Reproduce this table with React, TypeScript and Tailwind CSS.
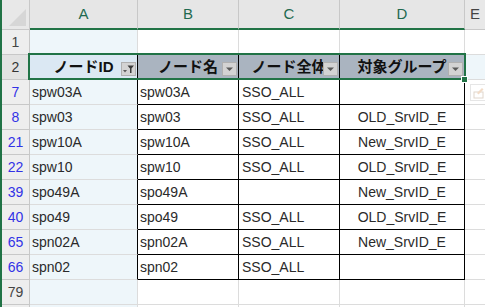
const rows = [
  { n: "7", a: "spw03A", b: "spw03A", c: "SSO_ALL", d: "" },
  { n: "8", a: "spw03", b: "spw03", c: "SSO_ALL", d: "OLD_SrvID_E" },
  { n: "21", a: "spw10A", b: "spw10A", c: "SSO_ALL", d: "New_SrvID_E" },
  { n: "22", a: "spw10", b: "spw10", c: "SSO_ALL", d: "OLD_SrvID_E" },
  { n: "39", a: "spo49A", b: "spo49A", c: "", d: "New_SrvID_E" },
  { n: "40", a: "spo49", b: "spo49", c: "SSO_ALL", d: "OLD_SrvID_E" },
  { n: "65", a: "spn02A", b: "spn02A", c: "SSO_ALL", d: "New_SrvID_E" },
  { n: "66", a: "spn02", b: "spn02", c: "SSO_ALL", d: "" },
];

const DropBtn = ({ filtered }: { filtered?: boolean }) => (
  <div className="absolute right-[1px] bottom-[3px] w-[15px] h-[14px] bg-[#d3d3d3] border border-[#b0b0b0] flex items-center justify-center">
    {filtered ? (
      <svg width="13" height="12" viewBox="0 0 13 12">
        <path d="M1 7h4l-2 2.5z" fill="#5a5a5a" />
        <path d="M5.5 2.5h6.5l-2.5 3v4.5h-1.5v-4.5z" fill="#3a3a3a" />
      </svg>
    ) : (
      <svg width="9" height="6" viewBox="0 0 9 6">
        <path d="M1 1.5h7l-3.5 3.5z" fill="#5a5a5a" />
      </svg>
    )}
  </div>
);

const HeadCell = ({ label, w, bg, filtered }: { label: string; w: string; bg: string; filtered?: boolean }) => (
  <div className={`relative ${w} ${bg} h-full border-r border-black overflow-hidden flex items-center justify-center font-bold text-[15px] text-[#111] font-['Liberation_Sans','Noto_Sans_CJK_JP',sans-serif] whitespace-nowrap`}>
    <span>{label}</span>
    <DropBtn filtered={filtered} />
  </div>
);

export default function App() {
  return (
    <div className="relative w-[485px] h-[307px] overflow-hidden bg-white border-l-2 border-[#217346] font-['Liberation_Sans','Noto_Sans_CJK_JP',sans-serif] text-[14px] text-[#2a2a2a]">
      {/* column headers */}
      <div className="flex h-[30px]">
        <div className="w-[28px] h-full bg-[#e8e8e8] border-r border-b border-[#c8c8c8] flex items-end justify-end p-[3px]">
          <div className="w-[17px] h-[17px] bg-[#d6d6d6] [clip-path:polygon(100%_0,100%_100%,0_100%)]" />
        </div>
        {[
          ["A", "w-[108px]"],
          ["B", "w-[101px]"],
          ["C", "w-[101px]"],
          ["D", "w-[125px]"],
        ].map(([l, w]) => (
          <div key={l} className={`${w} h-full bg-[#e6e6e6] border-r border-[#c8c8c8] border-b-2 border-b-[#217346] flex items-center justify-center text-[15px] text-[#1f6a50]`}>
            {l}
          </div>
        ))}
        <div className="flex-1 h-full bg-[#e8e8e8] border-b border-[#c8c8c8] flex items-center justify-center text-[15px] text-[#444]">
          E
        </div>
      </div>

      {/* row 1 */}
      <div className="flex h-[25px]">
        <div className="w-[28px] bg-[#eeeeee] border-r border-b border-[#c8c8c8] flex items-center justify-center text-[#444]">1</div>
        <div className="w-[108px] bg-[#eef6fa] border-r border-b border-[#dcdcdc]" />
        <div className="w-[101px] border-r border-b border-[#dcdcdc]" />
        <div className="w-[101px] border-r border-b border-[#dcdcdc]" />
        <div className="w-[125px] border-r border-b border-[#dcdcdc]" />
        <div className="flex-1 border-b border-[#dcdcdc]" />
      </div>

      {/* row 2 header of table */}
      <div className="relative flex h-[25px]">
        <div className="w-[28px] bg-[#e2e2e2] border-r border-b border-[#c8c8c8] flex items-center justify-center text-[#333]">2</div>
        <div className="flex h-[24px]">
          <HeadCell label="ノードID" w="w-[108px]" bg="bg-[#dbe8f3]" filtered />
          <HeadCell label="ノード名" w="w-[101px]" bg="bg-[#aab4c0]" />
          <HeadCell label="ノード全体" w="w-[101px]" bg="bg-[#aab4c0]" />
          <HeadCell label="対象グループ" w="w-[125px]" bg="bg-[#aab4c0]" />
        </div>
        <div className="flex-1 bg-[#eef6fa] border-b border-[#dcdcdc]" />
        <div className="absolute left-[26px] top-[-2px] w-[438px] h-[27px] border-2 border-[#217346]" />
        <div className="absolute left-[459px] top-[21px] w-[7px] h-[7px] bg-[#217346] border border-white" />
      </div>

      {/* data rows */}
      {rows.map((r) => (
        <div key={r.n} className="flex h-[25px]">
          <div className="w-[28px] bg-[#eeeeee] border-r border-b border-[#c8c8c8] flex items-center justify-center text-[#3232e6]">{r.n}</div>
          <div className="w-[108px] bg-[#eef6fa] border-r border-r-black border-b border-b-[#dcdcdc] flex items-center pl-[2px]">{r.a}</div>
          <div className="w-[101px] border-r border-b border-black flex items-center pl-[2px]">{r.b}</div>
          <div className="w-[101px] border-r border-b border-black flex items-center pl-[3px]">{r.c}</div>
          <div className="w-[125px] border-r border-b border-black flex items-center justify-center">{r.d}</div>
          <div className="flex-1 border-b border-[#dcdcdc]" />
        </div>
      ))}

      {/* row 79 */}
      <div className="flex h-[25px]">
        <div className="w-[28px] bg-[#eeeeee] border-r border-b border-[#c8c8c8] flex items-center justify-center text-[#444]">79</div>
        <div className="w-[108px] bg-[#eef6fa] border-r border-b border-[#dcdcdc]" />
        <div className="w-[101px] border-r border-b border-[#dcdcdc]" />
        <div className="w-[101px] border-r border-b border-[#dcdcdc]" />
        <div className="w-[125px] border-r border-b border-[#dcdcdc]" />
        <div className="flex-1 border-b border-[#dcdcdc]" />
      </div>
      <div className="flex h-[10px]">
        <div className="w-[28px] bg-[#eeeeee] border-r border-[#c8c8c8]" />
        <div className="w-[108px] bg-[#eef6fa] border-r border-[#dcdcdc]" />
        <div className="w-[101px] border-r border-[#dcdcdc]" />
        <div className="w-[101px] border-r border-[#dcdcdc]" />
        <div className="w-[125px] border-r border-[#dcdcdc]" />
      </div>

      {/* quick analysis ghost icon */}
      <div className="absolute left-[468px] top-[84px] w-[17px] h-[17px] border border-[#e6e6e6] bg-white flex items-center justify-center">
        <svg width="12" height="12" viewBox="0 0 12 12">
          <rect x="1" y="5" width="9" height="6" fill="none" stroke="#e0d6cc" />
          <path d="M4 6l5-5 1.5 1.5-5 5z" fill="#f2dcc8" />
        </svg>
      </div>
    </div>
  );
}
